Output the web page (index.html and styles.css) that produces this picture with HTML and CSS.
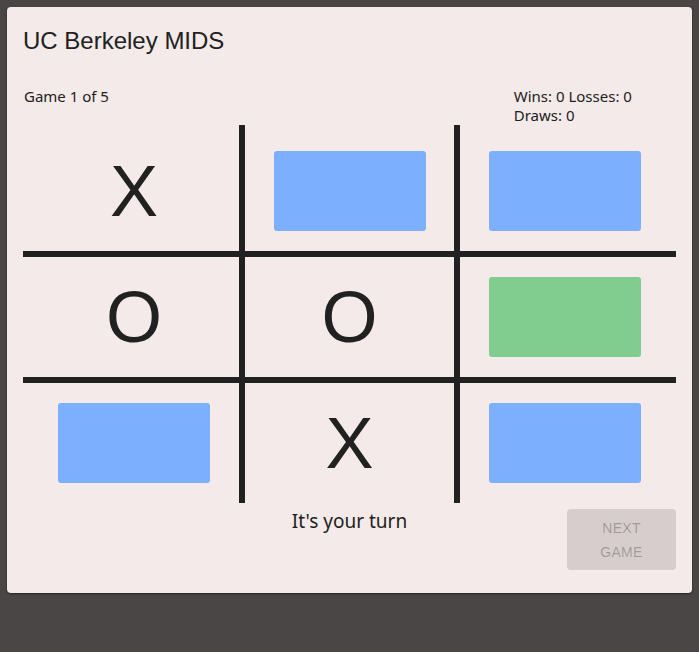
FILE: index.html
```html
<!DOCTYPE html>
<html>
<head>
<meta charset="utf-8">
<link rel="stylesheet" href="styles.css">
</head>
<body>
<div class="card">
  <h1 class="title">UC Berkeley MIDS</h1>
  <div class="header">
    <div class="game">Game 1 of 5</div>
    <div class="score">Wins: 0 Losses: 0 Draws: 0</div>
  </div>
  <div class="board">
    <div class="cell c0 r0"><span class="mark">X</span></div>
    <div class="cell c1 r0"><div class="tile blue"></div></div>
    <div class="cell c2 r0"><div class="tile blue"></div></div>
    <div class="cell c0 r1"><span class="mark">O</span></div>
    <div class="cell c1 r1"><span class="mark">O</span></div>
    <div class="cell c2 r1"><div class="tile green"></div></div>
    <div class="cell c0 r2"><div class="tile blue"></div></div>
    <div class="cell c1 r2"><span class="mark">X</span></div>
    <div class="cell c2 r2"><div class="tile blue"></div></div>
  </div>
  <div class="footer">
    <div class="status">It's your turn</div>
    <button class="next" disabled>Next<br>Game</button>
  </div>
</div>
</body>
</html>
```
FILE: styles.css
```css
html, body {
  margin: 0;
  padding: 0;
  background: #4b4646;
  height: 100%;
}
body {
  padding: 7px;
  box-sizing: border-box;
}
.card {
  width: 685px;
  height: 586px;
  box-sizing: border-box;
  background: #f4eae9;
  border-radius: 4px;
  box-shadow: 0 1px 3px rgba(0,0,0,0.3), 0 1px 1px rgba(0,0,0,0.2);
  padding: 20px 16px 16px 16px;
  color: #212121;
}
.title {
  margin: 0;
  font-family: "Liberation Sans", Arial, sans-serif;
  font-weight: 400;
  font-size: 24px;
  line-height: 28px;
}
.header {
  display: grid;
  grid-template-columns: 3fr 1fr;
  margin-top: 32px;
  font-family: "Noto Sans", sans-serif;
  font-size: 15px;
  line-height: 19px;
  height: 38px;
}
.game, .score {
  padding-left: 1px;
}
.board {
  display: grid;
  grid-template-columns: 216px 209px 216px;
  grid-template-rows: 126px 120px 120px;
  gap: 6px;
  background: #212121;
  width: 653px;
}
.cell {
  background: #f4eae9;
  display: flex;
  align-items: center;
  justify-content: center;
}
.c0 { padding-left: 6px; }
.c2 { padding-right: 6px; }
.r0 { padding-top: 6px; }
.tile {
  width: 152px;
  height: 80px;
  border-radius: 3px;
}
.blue { background: #7cb0ff; }
.green { background: #81cd8f; }
.mark {
  font-family: "Liberation Sans", Arial, sans-serif;
  font-size: 72px;
  line-height: 1;
  color: #212121;
}
.footer {
  display: grid;
  grid-template-columns: 1fr auto 1fr;
  margin-top: 6px;
  align-items: start;
}
.status {
  grid-column: 2;
  font-family: "Noto Sans", sans-serif;
  font-size: 19px;
  line-height: 24px;
}
.next {
  grid-column: 3;
  justify-self: end;
  width: 109px;
  height: 61px;
  border: none;
  border-radius: 4px;
  background: rgba(0,0,0,0.12);
  color: rgba(0,0,0,0.26);
  font-family: "Liberation Sans", Arial, sans-serif;
  font-size: 14px;
  line-height: 24px;
  text-transform: uppercase;
  letter-spacing: 0.3px;
  padding: 6px 16px;
}
```
